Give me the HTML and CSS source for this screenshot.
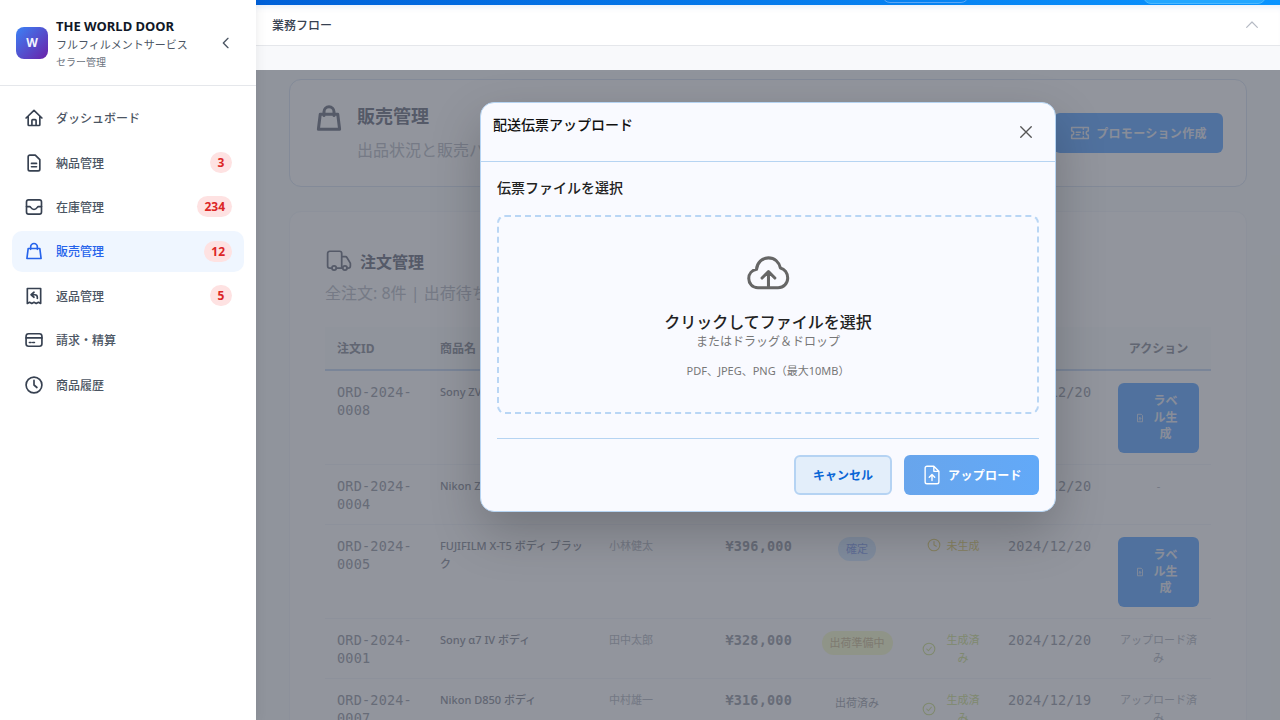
FILE: index.html
```html
<!DOCTYPE html>
<html lang="ja">
<head>
<meta charset="utf-8">
<title>販売管理</title>
<link rel="stylesheet" href="styles.css">
</head>
<body>
<div class="app">
  <aside class="sidebar">
    <div class="brand">
      <div class="logo">W</div>
      <div class="brand-text">
        <div class="brand-title">THE WORLD DOOR</div>
        <div class="brand-sub">フルフィルメントサービス</div>
        <div class="brand-role">セラー管理</div>
      </div>
      <svg class="collapse" viewBox="0 0 24 24"><path d="M15 5l-7 7 7 7"/></svg>
    </div>
    <nav class="nav">
      <a class="nav-item"><svg class="ico" viewBox="0 0 24 24"><path d="M2.500 12L12 2.800 21.500 12M5 9.800V20a1 1 0 001 1h12a1 1 0 001-1V9.800M9.500 21v-6a1 1 0 011-1h3a1 1 0 011 1v6"/></svg><span class="nav-label">ダッシュボード</span></a>
      <a class="nav-item"><svg class="ico" viewBox="0 0 24 24"><path d="M13.500 2.500H7a2 2 0 00-2 2v15a2 2 0 002 2h10a2 2 0 002-2V8zM9 12.500h6M9 16.500h6"/></svg><span class="nav-label">納品管理</span><span class="badge">3</span></a>
      <a class="nav-item"><svg class="ico" viewBox="0 0 24 24"><rect x="3" y="3.500" width="18" height="17" rx="2.500"/><path d="M3 11.500h4c1 0 1.500 3.500 5 3.500s4-3.500 5-3.500h4"/></svg><span class="nav-label">在庫管理</span><span class="badge">234</span></a>
      <a class="nav-item active"><svg class="ico" viewBox="0 0 24 24"><path d="M8 10V7a4 4 0 018 0v3M5 9h14l1.500 12h-17z"/></svg><span class="nav-label">販売管理</span><span class="badge">12</span></a>
      <a class="nav-item"><svg class="ico" viewBox="0 0 24 24"><path d="M4 3h16v18l-2.700-1.500L14.700 21 12 19.500 9.300 21l-2.600-1.500L4 21zM12 7.500L8.500 10.500l3.500 3M8.500 10.500H13a3 3 0 013 3v1.500"/></svg><span class="nav-label">返品管理</span><span class="badge">5</span></a>
      <a class="nav-item"><svg class="ico" viewBox="0 0 24 24"><rect x="2.500" y="4.500" width="19" height="15" rx="3"/><path d="M2.500 9.500h19M6.500 15h2M10.500 15h2"/></svg><span class="nav-label">請求・精算</span></a>
      <a class="nav-item"><svg class="ico" viewBox="0 0 24 24"><circle cx="12" cy="12" r="9.500"/><path d="M12 6.500V12l3.500 3"/></svg><span class="nav-label">商品履歴</span></a>
    </nav>
  </aside>

  <main class="main">
    <div class="topstrip">
      <span class="strip-btn strip-btn-a"></span>
      <span class="strip-btn strip-btn-b"></span>
    </div>
    <div class="flowbar">
      <span class="flow-title">業務フロー</span>
      <svg class="flow-chevron" viewBox="0 0 24 24"><path d="M4 15.500l8-8 8 8"/></svg>
    </div>
    <div class="flowgap"></div>
    <div class="content">
      <section class="card hero">
        <svg class="hero-ico" viewBox="0 0 24 24"><path d="M8 10V7a4 4 0 018 0v3M5 9h14l1.500 12h-17z"/></svg>
        <div class="hero-text">
          <h1 class="hero-title">販売管理</h1>
          <p class="hero-sub">出品状況と販売パフォーマンスを管理します</p>
        </div>
        <button class="primary promo"><svg class="promo-ico" viewBox="0 0 24 24"><path d="M2 5.500h20v4a2.500 2.500 0 000 5v4H2v-4a2.500 2.500 0 000-5zM16 5.500v2M16 10.500v3M16 16.500v2M7.500 11h5M7.500 14h3.500"/></svg>プロモーション作成</button>
      </section>

      <section class="card orders">
        <div class="orders-head">
          <svg class="truck" viewBox="0 0 24 24"><path d="M5.500 18.500H3.500a2 2 0 01-2-2V5a2 2 0 012-2h9a2 2 0 012 2v13.500M9.500 18.500h5.500M14.500 8h3.500a1.500 1.500 0 011.300.700l3 5a1.500 1.500 0 01.200.800v2a2 2 0 01-2 2h-1.500"/><circle cx="7.500" cy="18.500" r="2"/><circle cx="17.500" cy="18.500" r="2"/></svg>
          <h2 class="orders-title">注文管理</h2>
        </div>
        <p class="orders-sub">全注文: 8件 | 出荷待ち: 3件 | ラベル未生成: 2件</p>
        <table class="table">
          <colgroup>
            <col class="c-id"><col class="c-name"><col class="c-cust"><col class="c-price"><col class="c-status"><col class="c-label"><col class="c-date"><col class="c-act">
          </colgroup>
          <thead>
            <tr><th>注文ID</th><th>商品名</th><th>購入者</th><th class="right">金額</th><th class="center">状態</th><th class="center">ラベル</th><th>注文日</th><th class="center">アクション</th></tr>
          </thead>
          <tbody>
            <tr>
              <td class="mono">ORD-2024-0008</td><td class="name">Sony ZV-E10</td><td class="cust">山本真理</td><td class="mono bold right">¥98,000</td>
              <td class="center"><span class="pill pill-blue">確定</span></td>
              <td><div class="lbl lbl-wait"><svg class="lbl-ico" viewBox="0 0 24 24"><circle cx="12" cy="12" r="10"/><path d="M12 6v6l4 2"/></svg><span>未生成</span></div></td>
              <td class="mono">2024/12/20</td>
              <td><button class="primary gen"><svg class="gen-ico" viewBox="0 0 24 24"><path d="M14 3H6v18h12V7zM12 17v-6M9.500 13.500L12 11l2.500 2.500"/></svg><span>ラベル生成</span></button></td>
            </tr>
            <tr>
              <td class="mono">ORD-2024-0004</td><td class="name">Nikon Z6 II</td><td class="cust">高橋美咲</td><td class="mono bold right">¥248,000</td>
              <td class="center"><span class="pill pill-blue">確定</span></td>
              <td><div class="lbl lbl-wait"><svg class="lbl-ico" viewBox="0 0 24 24"><circle cx="12" cy="12" r="10"/><path d="M12 6v6l4 2"/></svg><span>未生成</span></div></td>
              <td class="mono">2024/12/20</td>
              <td class="center muted">-</td>
            </tr>
            <tr>
              <td class="mono">ORD-2024-0005</td><td class="name">FUJIFILM X-T5 ボディ ブラック</td><td class="cust">小林健太</td><td class="mono bold right">¥396,000</td>
              <td class="center"><span class="pill pill-blue">確定</span></td>
              <td><div class="lbl lbl-wait"><svg class="lbl-ico" viewBox="0 0 24 24"><circle cx="12" cy="12" r="10"/><path d="M12 6v6l4 2"/></svg><span>未生成</span></div></td>
              <td class="mono">2024/12/20</td>
              <td><button class="primary gen"><svg class="gen-ico" viewBox="0 0 24 24"><path d="M14 3H6v18h12V7zM12 17v-6M9.500 13.500L12 11l2.500 2.500"/></svg><span>ラベル生成</span></button></td>
            </tr>
            <tr>
              <td class="mono">ORD-2024-0001</td><td class="name">Sony α7 IV ボディ</td><td class="cust">田中太郎</td><td class="mono bold right">¥328,000</td>
              <td class="center"><span class="pill pill-yellow">出荷準備中</span></td>
              <td><div class="lbl lbl-done"><svg class="lbl-ico" viewBox="0 0 24 24"><circle cx="12" cy="12" r="10"/><path d="M8 12l3 3 5-6"/></svg><span>生成済み</span></div></td>
              <td class="mono">2024/12/20</td>
              <td class="center muted">アップロード済み</td>
            </tr>
            <tr>
              <td class="mono">ORD-2024-0007</td><td class="name">Nikon D850 ボディ</td><td class="cust">中村雄一</td><td class="mono bold right">¥316,000</td>
              <td class="center"><span class="pill pill-plain">出荷済み</span></td>
              <td><div class="lbl lbl-done"><svg class="lbl-ico" viewBox="0 0 24 24"><circle cx="12" cy="12" r="10"/><path d="M8 12l3 3 5-6"/></svg><span>生成済み</span></div></td>
              <td class="mono">2024/12/19</td>
              <td class="center muted">アップロード済み</td>
            </tr>
          </tbody>
        </table>
      </section>
    </div>

    <div class="overlay">
      <div class="modal">
        <header class="modal-head">
          <h3 class="modal-title">配送伝票アップロード</h3>
          <svg class="close" viewBox="0 0 24 24"><path d="M5 5l14 14M19 5L5 19"/></svg>
        </header>
        <div class="modal-body">
          <div class="field-label">伝票ファイルを選択</div>
          <div class="dropzone">
            <svg class="cloud" viewBox="0 0 48 48"><path d="M13 40C7 40 3 35.500 3 30 3 25 6.500 21 11.500 20 12 13 17.500 7.500 24.500 7.500 31 7.500 36 12 37.500 18.500 42 19.500 45.500 24 45.500 29.500 45.500 35.500 41 40 35 40ZM24.500 40V23M17.500 29.500L24.500 22.500 31.500 29.500"/></svg>
            <div class="drop-main">クリックしてファイルを選択</div>
            <div class="drop-sub">またはドラッグ＆ドロップ</div>
            <div class="drop-note">PDF、JPEG、PNG（最大10MB）</div>
          </div>
        </div>
        <footer class="modal-foot">
          <button class="cancel">キャンセル</button>
          <button class="upload"><svg class="upload-ico" viewBox="0 0 24 24"><path d="M14 2.500H6.500a2 2 0 00-2 2v15a2 2 0 002 2h11a2 2 0 002-2V8zM14 2.500V8h5.500M12 18v-6.500M9 14.500l3-3 3 3"/></svg>アップロード</button>
        </footer>
      </div>
    </div>
  </main>
</div>
</body>
</html>
```

FILE: styles.css
```css
* { box-sizing: border-box; }

html, body {
  margin: 0;
  height: 100%;
  overflow: hidden;
}

body {
  font-family: "Noto Sans", "Noto Sans CJK JP", sans-serif;
  background: #f8f9fb;
  color: #1f2937;
}

svg {
  fill: none;
  stroke: currentColor;
  stroke-linecap: round;
  stroke-linejoin: round;
}

h1, h2, h3, p { margin: 0; }

button { font-family: inherit; border: 0; }

.app {
  display: flex;
  height: 720px;
  overflow: hidden;
}

/* Sidebar */
.sidebar {
  width: 256px;
  flex: none;
  background: #fff;
  box-shadow: 0 0 12px rgba(0, 0, 0, .08);
  position: relative;
  z-index: 3;
}

.brand {
  height: 86px;
  display: flex;
  align-items: center;
  gap: 8px;
  padding: 0 16px;
  border-bottom: 1px solid #e5e7eb;
}

.logo {
  width: 32px;
  height: 32px;
  flex: none;
  border-radius: 8px;
  background: linear-gradient(135deg, #3b82f6, #6b21a8);
  color: #f3f4ff;
  font-size: 12px;
  font-weight: 700;
  display: flex;
  align-items: center;
  justify-content: center;
}

.brand-text { flex: 1; min-width: 0; }

.brand-title {
  font-size: 13px;
  font-weight: 700;
  line-height: 20px;
  color: #111827;
}

.brand-sub {
  font-size: 11px;
  line-height: 18px;
  color: #4b5563;
}

.brand-role {
  font-size: 10px;
  line-height: 16px;
  color: #6b7280;
}

.collapse {
  width: 16px;
  height: 16px;
  stroke-width: 2;
  color: #4b5563;
  margin-right: 6px;
}

.nav {
  display: flex;
  flex-direction: column;
  gap: 4px;
  padding: 12px;
}

.nav-item {
  height: 40.400px;
  display: flex;
  align-items: center;
  padding: 0 12px;
  border-radius: 10px;
  font-size: 12px;
  font-weight: 500;
  color: #4b5563;
}

.nav-item .ico {
  width: 20px;
  height: 20px;
  flex: none;
  stroke-width: 2;
  margin-right: 12px;
  color: #374151;
}

.nav-label { flex: 1; }

.nav-item.active { background: #eff6ff; color: #2563eb; }
.nav-item.active .ico { color: #2563eb; }

.badge {
  min-width: 22px;
  height: 21px;
  padding: 0 7px;
  border-radius: 11px;
  background: #fee2e2;
  color: #dc2626;
  font-size: 12px;
  font-weight: 700;
  line-height: 21px;
  text-align: center;
}

/* Main */
.main {
  flex: 1;
  min-width: 0;
  position: relative;
  overflow: hidden;
}

.topstrip {
  height: 5px;
  background: linear-gradient(90deg, #0060d8, #0a94ff);
  position: relative;
  overflow: hidden;
}

.strip-btn {
  position: absolute;
  top: -26px;
  height: 29px;
  border-radius: 8px;
}

.strip-btn-a {
  left: 626px;
  width: 87px;
  border: 1px solid #5ba6f5;
}

.strip-btn-b {
  left: 887px;
  width: 123px;
  height: 30px;
  background: #22a6ff;
  border: 1px solid #4cb8ff;
}

.flowbar {
  height: 41px;
  background: #fff;
  border-bottom: 1px solid #e5e7eb;
  display: flex;
  align-items: center;
  justify-content: space-between;
  padding: 0 20px 0 16px;
  box-shadow: inset 0 6px 6px -4px rgba(0, 80, 200, .10);
}

.flow-title {
  font-size: 12px;
  font-weight: 500;
  color: #374151;
}

.flow-chevron {
  width: 16px;
  height: 16px;
  stroke-width: 1.800;
  color: #b5bac4;
}

.flowgap {
  height: 24px;
  background: #f8f9fb;
}

.content {
  display: flex;
  flex-direction: column;
  gap: 24px;
  padding: 9px 33px 0;
}

.card {
  background: #fbfbfd;
  border: 1px solid #e0e8f4;
  border-radius: 12px;
}

.primary {
  background: #83baff;
  color: #e9edf6;
  font-weight: 700;
}

.hero {
  height: 108px;
  display: flex;
  align-items: center;
  padding: 0 23px 0 24px;
}

.hero-ico {
  width: 30px;
  height: 30px;
  flex: none;
  color: #8c909d;
  stroke-width: 2.400;
  margin-right: 13px;
  align-self: flex-start;
  margin-top: 23px;
}

.hero-text {
  flex: 1;
  min-width: 0;
  align-self: flex-start;
  padding-top: 22px;
}

.hero-title {
  font-size: 18px;
  line-height: 28px;
  font-weight: 700;
  color: #8c909d;
}

.hero-sub {
  font-size: 16px;
  line-height: 24px;
  margin-top: 8px;
  color: #c8cbd3;
}

.promo {
  height: 40px;
  width: 169px;
  flex: none;
  border-radius: 6px;
  font-size: 12px;
  letter-spacing: .3px;
  display: flex;
  align-items: center;
  justify-content: center;
  gap: 6px;
}

.promo-ico { width: 20px; height: 20px; stroke-width: 1.800; }

.orders {
  padding: 34px 35px 24px;
  border-color: #f2f5fa;
}

.orders-head {
  display: flex;
  align-items: center;
  gap: 8px;
  height: 30px;
}

.truck {
  width: 26px;
  height: 26px;
  margin-left: 1px;
  color: #8c909d;
  stroke-width: 1.600;
}

.orders-title {
  font-size: 16px;
  font-weight: 700;
  color: #8c909d;
}

.orders-sub {
  font-size: 16px;
  line-height: 24px;
  margin-top: 5px;
  color: #c8cbd3;
  white-space: nowrap;
}

.table {
  width: 886px;
  table-layout: fixed;
  border-collapse: collapse;
  margin-top: 22px;
}

.c-id { width: 103px; }
.c-name { width: 169px; }
.c-cust { width: 103px; }
.c-price { width: 104px; }
.c-status { width: 106px; }
.c-label { width: 86px; }
.c-date { width: 110px; }
.c-act { width: 105px; }

th {
  height: 43px;
  padding: 0 12px;
  font-size: 12px;
  font-weight: 700;
  text-align: left;
  color: #a3a6b0;
  background: #f8f9fb;
  border-bottom: 2px solid #cfdef5;
}

td {
  padding: 12px 12px 11px;
  font-size: 11px;
  line-height: 18px;
  vertical-align: top;
  border-bottom: 1px solid #f3f5fa;
  color: #a3a6b0;
}

.right { text-align: right; }
.center { text-align: center; }

.mono {
  font-family: "DejaVu Sans Mono", monospace;
  font-size: 13.500px;
  letter-spacing: .2px;
  color: #aeb1ba;
  overflow-wrap: anywhere;
}

.bold { font-weight: 700; }

.name { font-weight: 500; }

.cust { color: #c4c7cf; }

.muted { color: #c4c7cf; }

.pill {
  display: inline-block;
  padding: 3px 8px;
  border-radius: 12px;
  line-height: 18px;
  font-size: 11px;
}

.pill-blue { background: #dbebff; color: #9fb4f1; }
.pill-yellow { background: #f6f9d7; color: #d7caac; }
.pill-plain { color: #b4b7bf; }

.lbl {
  display: flex;
  align-items: center;
  justify-content: center;
  gap: 6px;
  font-size: 11px;
  text-align: center;
}

.lbl-ico { width: 14px; height: 14px; flex: none; stroke-width: 1.800; }

.lbl-wait { color: #e6d890; align-items: flex-start; }
.lbl-wait .lbl-ico { margin-top: 1px; }
.lbl-done { color: #d9e6a8; }

.gen {
  width: 81px;
  border-radius: 6px;
  padding: 10px 10px 10px 6px;
  font-size: 12px;
  line-height: 16.670px;
  display: flex;
  align-items: center;
  justify-content: center;
  gap: 8px;
}

.gen-ico { width: 10px; height: 10px; flex: none; stroke-width: 2; }
.gen span { width: 25px; text-align: center; }

/* Modal */
.overlay {
  position: absolute;
  top: 70px;
  left: 0;
  right: 0;
  bottom: 0;
  background: rgba(17, 24, 39, .45);
  display: flex;
  justify-content: center;
  align-items: flex-start;
  padding-top: 32px;
  z-index: 2;
}

.modal {
  width: 576px;
  height: 410px;
  background: #f9faff;
  border: 1px solid #b6d4f2;
  border-radius: 14px;
  box-shadow: 0 20px 50px rgba(0, 0, 0, .22);
  display: flex;
  flex-direction: column;
}

.modal-head {
  height: 59px;
  flex: none;
  display: flex;
  justify-content: space-between;
  align-items: flex-start;
  padding: 11px 20px 0 12px;
  border-bottom: 1px solid #b6d4f2;
}

.modal-title {
  font-size: 14px;
  font-weight: 500;
  line-height: 22px;
  color: #111;
}

.close {
  width: 18px;
  height: 18px;
  margin-top: 9px;
  stroke-width: 1.800;
  color: #555;
}

.modal-body { padding: 15px 16px 0; }

.field-label {
  font-size: 14px;
  font-weight: 500;
  line-height: 22px;
  color: #222;
}

.dropzone {
  height: 199px;
  margin-top: 16px;
  border: 2px dashed #b9d6f5;
  border-radius: 8px;
  display: flex;
  flex-direction: column;
  align-items: center;
  padding-top: 34px;
}

.cloud {
  width: 44px;
  height: 44px;
  stroke-width: 3.300;
  color: #666;
}

.drop-main {
  margin-top: 16px;
  font-size: 16px;
  font-weight: 500;
  line-height: 22px;
  color: #222;
}

.drop-sub {
  font-size: 12px;
  line-height: 18px;
  color: #777;
}

.drop-note {
  margin-top: 11px;
  font-size: 11px;
  line-height: 18px;
  color: #777;
}

.modal-foot {
  margin: 24px 16px 0;
  padding-top: 16px;
  border-top: 1px solid #b6d4f2;
  display: flex;
  justify-content: flex-end;
  gap: 12px;
}

.cancel {
  width: 98px;
  height: 40px;
  border-radius: 6px;
  border: 2px solid #b5d3f3;
  background: #e3eefa;
  color: #0a66d6;
  font-size: 12px;
  font-weight: 700;
}

.upload {
  width: 135px;
  height: 40px;
  border-radius: 6px;
  background: linear-gradient(90deg, #68a5ec, #62a9f8);
  color: #fff;
  font-size: 12px;
  font-weight: 700;
  letter-spacing: .3px;
  display: flex;
  align-items: center;
  justify-content: center;
  gap: 5px;
}

.upload-ico { width: 22px; height: 22px; stroke-width: 1.500; }
```
